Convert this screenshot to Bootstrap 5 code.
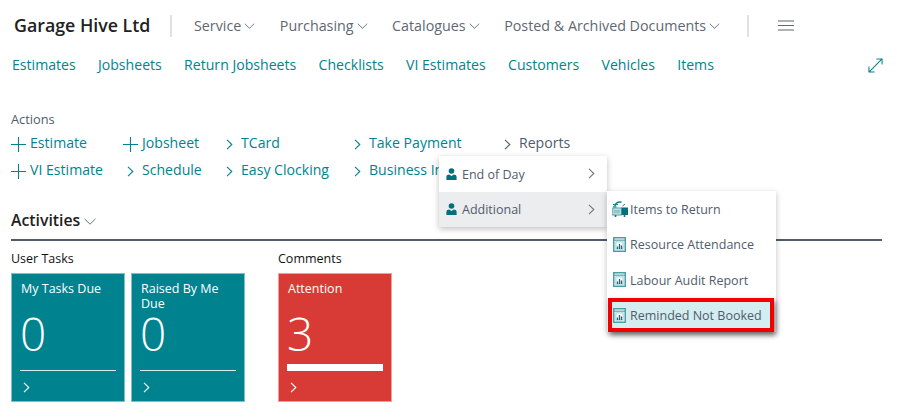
<!DOCTYPE html>
<html lang="en">
<head>
  <meta charset="UTF-8">
  <title>Garage Hive Ltd</title>
  <link rel="stylesheet" href="https://cdn.jsdelivr.net/npm/bootstrap@5.3.0/dist/css/bootstrap.min.css">
  <style>
    body { background: #fff; font-family: "Open Sans", "Liberation Sans", sans-serif; font-size: 14px; color: #505c6d; width: 900px; height: 417px; overflow: hidden; position: relative; }
    a { text-decoration: none; color: inherit; }
    .top-bar { height: 51px; padding-left: 14px; }
    .company { font-size: 17.8px; font-weight: 600; color: #212121; width: 156px; }
    .v-sep { width: 2px; height: 22px; background: #e1e1e1; }
    .top-menu { width: 575px; padding-left: 22px; gap: 24.5px; font-size: 14.3px; }
    .top-menu a { display: flex; align-items: center; gap: 3px; color: #5f6773; }
    .burger { margin-left: 29px; }
    .link-row { height: 24px; margin-top: 2px; padding: 0 17px 0 12px; color: #00838f; gap: 22.3px; font-size: 14.1px; }
    .actions { margin-top: 33px; padding-left: 11px; }
    .actions-label { font-size: 12.8px; line-height: 18px; margin-bottom: 1px; }
    .action-grid { display: grid; grid-template-columns: 112px 99px 128px 150px 120px; grid-auto-rows: 27px; color: #00838f; font-size: 14.1px; }
    .action-item { display: flex; align-items: center; white-space: nowrap; }
    .action-ico { width: 19px; flex: none; }
    .muted-item { color: #505c6d; }
    .section { margin: 26px 18px 0 11px; }
    .section-head { font-size: 15.8px; font-weight: 600; color: #212121; height: 32px; padding-bottom: 6px; border-bottom: 2px solid #505c6d; gap: 4px; }
    .group-title { font-size: 12.5px; font-weight: 500; color: #111; line-height: 18px; margin: 9px 0 5px; }
    .tile-group { width: 267px; }
    .tile-row { gap: 6px; }
    .tile { width: 114px; height: 129px; padding: 5px 8px 0 8px; color: #fff; background: #00838f; border: 1px solid #7fc1c7; }
    .tile-red { background: #d83b35; border-color: #ee9f9b; }
    .tile-name { font-size: 12.5px; line-height: 15px; height: 30px; margin: 2px 0 0 1px; }
    .tile-num { font-size: 46px; font-weight: 300; line-height: 44px; height: 59px; }
    .tile-bar { height: 1px; background: #d7ecee; margin-bottom: 11px; }
    .tile-red .tile-bar { height: 7px; background: #fff; margin-top: -6px; }
    .tile-chev { display: block; margin-left: 3px; }
    .fly { position: absolute; background: #fff; box-shadow: 0 2px 6px rgba(0,0,0,.25); color: #505c6d; font-size: 12.5px; }
    .fly-a { left: 439px; top: 156px; width: 168px; }
    .fly-b { left: 607px; top: 191px; width: 169px; }
    .fly-row { height: 35.5px; padding-left: 6px; gap: 4px; white-space: nowrap; }
    .fly-row span { padding-top: 3px; }
    .fly-a .fly-row { padding-left: 7px; padding-right: 12px; gap: 5px; }
    .fly-a svg:last-child { color: #777; }
    .fly-current { background: #ebedef; }
    .fly-return { padding-left: 5px; gap: 2px; }
    .fly-picked { background: #d4edf0; outline: 4px solid #f00000; outline-offset: -4px; box-shadow: 2px 3px 5px rgba(0,0,0,.5); position: relative; width: 166px; height: 34px; margin-left: 1px; padding-left: 5px; margin-top: .5px; }
    .grow { flex: 1; }
  </style>
</head>
<body>
  <svg width="0" height="0" class="position-absolute">
    <symbol id="down" viewBox="0 0 12 7"><path d="M.5.8 6 6.200 11.500.8" fill="none" stroke="currentColor" stroke-width="1"/></symbol>
    <symbol id="plus" viewBox="0 0 15 15"><path d="M7.500 0v15M0 7.500h15" stroke="currentColor" stroke-width="1.100"/></symbol>
    <symbol id="chev" viewBox="0 0 7 11"><path d="M1 .8 5.800 5.500 1 10.200" fill="none" stroke="currentColor" stroke-width="1.100"/></symbol>
    <symbol id="person" viewBox="0 0 11 12"><circle cx="5.500" cy="3" r="2.800" fill="#00707c"/><path d="M.4 12V8.800C.4 7.200 2 6.500 3.200 6.500L5.500 8 7.800 6.500c1.200 0 2.800.7 2.800 2.300V12z" fill="#00707c"/></symbol>
    <symbol id="report" viewBox="0 0 13 15"><rect x=".7" y=".7" width="11.600" height="13.600" fill="#dff0f2" stroke="#4a9da6" stroke-width="1.400"/><path d="M.7 3.200h11.600" stroke="#4a9da6"/><rect x="3" y="5" width="7" height="7" fill="#fff" stroke="#7fbcc2" stroke-width=".6"/><path d="M4.500 12V9.500M6.500 12V7M8.500 12V8.500" stroke="#1f6570" stroke-width="1.300"/></symbol>
    <symbol id="ret" viewBox="0 0 16 16"><path d="M3 5C3.500 2 6 .8 9.500 1.200" fill="none" stroke="#1f7d89" stroke-width="1.500"/><path d="M1 3.500h5M1 5.800h3.500" stroke="#1f7d89" stroke-width="1.200"/><rect x=".8" y="7" width="8.500" height="7" fill="#d9eef0" stroke="#4a9da6"/><path d="M3 8.500v4M5 8.500v4M7 8.500v4" stroke="#4a9da6"/><rect x="9.500" y="6.500" width="6.500" height="7.500" fill="#00707c"/><path d="M10.500 5 13 3" stroke="#1f7d89"/><circle cx="3.500" cy="15" r="1" fill="#00707c"/><circle cx="12.500" cy="15" r="1" fill="#00707c"/></symbol>
  </svg>

  <div class="top-bar d-flex align-items-center">
    <div class="company">Garage Hive Ltd</div>
    <div class="v-sep"></div>
    <nav class="top-menu d-flex align-items-center">
      <a href="#">Service <svg width="11" height="6"><use href="#down"/></svg></a>
      <a href="#">Purchasing <svg width="11" height="6"><use href="#down"/></svg></a>
      <a href="#">Catalogues <svg width="11" height="6"><use href="#down"/></svg></a>
      <a href="#">Posted &amp; Archived Documents <svg width="11" height="6"><use href="#down"/></svg></a>
    </nav>
    <div class="v-sep"></div>
    <svg class="burger" width="16" height="11" viewBox="0 0 16 11"><path d="M0 1h16M0 5.500h16M0 10h16" stroke="#5f6773" stroke-width="1.200"/></svg>
  </div>

  <div class="link-row d-flex align-items-center">
    <a href="#">Estimates</a>
    <a href="#">Jobsheets</a>
    <a href="#">Return Jobsheets</a>
    <a href="#">Checklists</a>
    <a href="#">VI Estimates</a>
    <a href="#">Customers</a>
    <a href="#">Vehicles</a>
    <a href="#">Items</a>
    <svg class="ms-auto" width="15" height="15" viewBox="0 0 16 16"><path d="M1 15 15 1M9 1h6v6M1 9v6h6" fill="none" stroke="#00838f" stroke-width="1.100"/></svg>
  </div>

  <div class="actions">
    <div class="actions-label">Actions</div>
    <div class="action-grid">
      <a href="#" class="action-item"><span class="action-ico"><svg width="15" height="15"><use href="#plus"/></svg></span>Estimate</a>
      <a href="#" class="action-item"><span class="action-ico"><svg width="15" height="15"><use href="#plus"/></svg></span>Jobsheet</a>
      <a href="#" class="action-item"><span class="action-ico ps-1"><svg width="7" height="11"><use href="#chev"/></svg></span>TCard</a>
      <a href="#" class="action-item"><span class="action-ico ps-1"><svg width="7" height="11"><use href="#chev"/></svg></span>Take Payment</a>
      <a href="#" class="action-item muted-item"><span class="action-ico ps-1"><svg width="7" height="11"><use href="#chev"/></svg></span>Reports</a>
      <a href="#" class="action-item"><span class="action-ico"><svg width="15" height="15"><use href="#plus"/></svg></span>VI Estimate</a>
      <a href="#" class="action-item"><span class="action-ico ps-1"><svg width="7" height="11"><use href="#chev"/></svg></span>Schedule</a>
      <a href="#" class="action-item"><span class="action-ico ps-1"><svg width="7" height="11"><use href="#chev"/></svg></span>Easy Clocking</a>
      <a href="#" class="action-item"><span class="action-ico ps-1"><svg width="7" height="11"><use href="#chev"/></svg></span>Business In</a>
    </div>
  </div>

  <div class="section">
    <div class="section-head d-flex align-items-center">Activities <svg width="12" height="7" class="text-secondary"><use href="#down"/></svg></div>
    <div class="d-flex">
      <div class="tile-group">
        <div class="group-title">User Tasks</div>
        <div class="tile-row d-flex">
          <a href="#" class="tile d-block">
            <div class="tile-name">My Tasks Due</div>
            <div class="tile-num">0</div>
            <div class="tile-bar"></div>
            <svg class="tile-chev" width="7" height="11"><use href="#chev"/></svg>
          </a>
          <a href="#" class="tile d-block">
            <div class="tile-name">Raised By Me<br>Due</div>
            <div class="tile-num">0</div>
            <div class="tile-bar"></div>
            <svg class="tile-chev" width="7" height="11"><use href="#chev"/></svg>
          </a>
        </div>
      </div>
      <div>
        <div class="group-title">Comments</div>
        <a href="#" class="tile tile-red d-block">
          <div class="tile-name">Attention</div>
          <div class="tile-num">3</div>
          <div class="tile-bar"></div>
          <svg class="tile-chev" width="7" height="11"><use href="#chev"/></svg>
        </a>
      </div>
    </div>
  </div>

  <div class="fly fly-a">
    <div class="fly-row d-flex align-items-center"><svg width="11" height="12"><use href="#person"/></svg><span class="grow">End of Day</span><svg width="7" height="11"><use href="#chev"/></svg></div>
    <div class="fly-row fly-current d-flex align-items-center"><svg width="11" height="12"><use href="#person"/></svg><span class="grow">Additional</span><svg width="7" height="11"><use href="#chev"/></svg></div>
  </div>
  <div class="fly fly-b">
    <div class="fly-row fly-return d-flex align-items-center"><svg width="16" height="16"><use href="#ret"/></svg><span>Items to Return</span></div>
    <div class="fly-row d-flex align-items-center"><svg width="13" height="15"><use href="#report"/></svg><span>Resource Attendance</span></div>
    <div class="fly-row d-flex align-items-center"><svg width="13" height="15"><use href="#report"/></svg><span>Labour Audit Report</span></div>
    <div class="fly-row fly-picked d-flex align-items-center"><svg width="13" height="15"><use href="#report"/></svg><span>Reminded Not Booked</span></div>
  </div>
</body>
</html>
